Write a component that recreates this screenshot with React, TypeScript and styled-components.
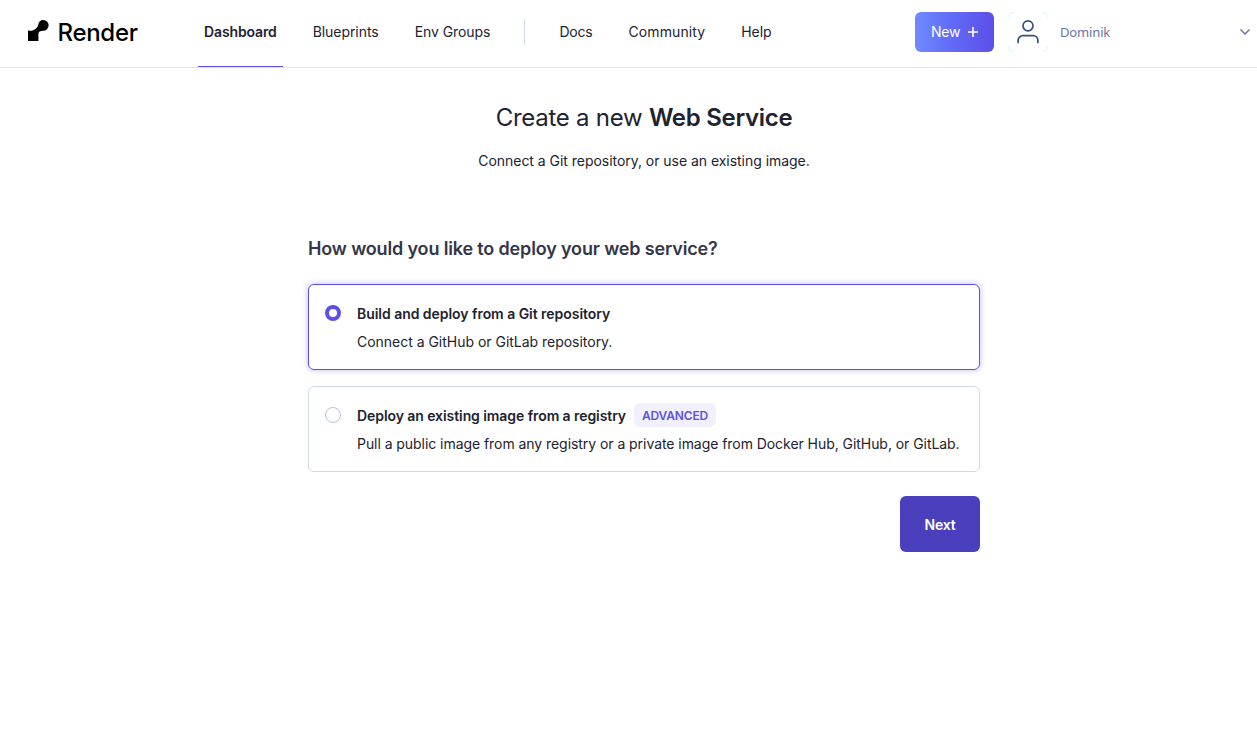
import React from "react";
import styled, { createGlobalStyle } from "styled-components";

const Global = createGlobalStyle`
  * { box-sizing: border-box; }
  body { margin: 0; background: #fff; color: #21222f; font-family: Inter, Roboto, sans-serif; font-size: 14px; line-height: 24px; }
  h1, h2, p { margin: 0; }
  button { font: inherit; border: 0; cursor: pointer; }
`;

const Text = styled.span<{ $track?: number }>`
  letter-spacing: ${(p) => p.$track ?? 0}px;
  white-space: pre;
`;

const Strong = styled(Text)`
  font-weight: 600;
`;

const Header = styled.header`
  height: 68px;
  display: flex;
  align-items: flex-start;
  border-bottom: 1px solid #dfe5f5;
`;

const Logo = styled.a`
  display: flex;
  align-items: flex-start;
  gap: 8.5px;
  width: 170px;
  height: 64px;
  padding-top: 20px;
  margin-left: 28px;
  color: #000;
  font-size: 24px;
  line-height: 26px;
  font-weight: 500;
`;

const Nav = styled.nav`
  display: flex;
  align-items: flex-start;
  gap: 24px;
`;

const NavLink = styled.a<{ $active?: boolean }>`
  height: 67px;
  padding: 20px 6px 0;
  border-bottom: 1px solid ${(p) => (p.$active ? "#5a4fe8" : "transparent")};
  font-weight: ${(p) => (p.$active ? 600 : 400)};
`;

const Divider = styled.div`
  width: 1px;
  height: 24px;
  margin: 20px 4px 0;
  background: #c9d8f0;
`;

const NewButton = styled.button`
  display: flex;
  align-items: center;
  gap: 7.7px;
  width: 79px;
  height: 40px;
  margin: 12px 14px 0 auto;
  padding: 0 0 0 16px;
  border-radius: 6px;
  color: #fff;
  background: linear-gradient(90deg, #6f8bff, #626bf7 45%, #5d4fe9);
`;

const Account = styled.div`
  display: flex;
  align-items: center;
  width: 249px;
  height: 64px;
  padding-right: 7px;
  font-family: "Noto Sans", sans-serif;
  font-size: 13px;
  color: #6b73a3;
`;

const Avatar = styled.div`
  width: 40px;
  height: 40px;
  margin-right: 12px;
  border-radius: 6px;
  background: #c4eefa;
`;

const AvatarFace = styled.div`
  display: flex;
  align-items: center;
  justify-content: center;
  width: 40px;
  height: 40px;
  border-radius: 7.5px;
  background: #fff;
`;

const Chevron = styled.svg`
  margin-left: auto;
`;

const Main = styled.main`
  width: 672px;
  margin: 0 auto 0 308px;
`;

const Intro = styled.section`
  display: flex;
  flex-direction: column;
  align-items: center;
  padding-top: 34px;
`;

const Title = styled.h1`
  font-size: 24px;
  line-height: 32px;
  font-weight: 400;
`;

const Subtitle = styled.p`
  margin-top: 15px;
`;

const Question = styled.h2`
  margin-top: 64px;
  font-size: 18px;
  line-height: 24px;
  font-weight: 600;
  color: #34364a;
`;

const Options = styled.div`
  display: flex;
  flex-direction: column;
  gap: 16px;
  margin-top: 23px;
`;

const Option = styled.label<{ $selected?: boolean }>`
  display: flex;
  gap: 16px;
  height: 86px;
  padding: 16px;
  border: 1px solid ${(p) => (p.$selected ? "#5a4fe8" : "#cdd9ee")};
  border-radius: 6px;
  box-shadow: ${(p) => (p.$selected ? "0 0 6px rgba(90, 79, 232, 0.4)" : "none")};
`;

const Radio = styled.span<{ $selected?: boolean }>`
  width: 16px;
  height: 16px;
  margin-top: 4px;
  flex: none;
  border-radius: 50%;
  border: ${(p) => (p.$selected ? "4px solid #5a4fe8" : "1px solid #b7c0e4")};
`;

const OptionTitle = styled.div`
  display: flex;
  gap: 8px;
  height: 24px;
  padding-top: 1px;
  font-weight: 600;
`;

const OptionText = styled.div`
  margin-top: 4px;
  padding-top: 1px;
`;

const Badge = styled.span`
  height: 24px;
  width: 82px;
  margin-top: -1px;
  padding: 1px 8px 0;
  border-radius: 6px;
  background: #f2f0ff;
  color: #5e50e8;
  font-size: 12px;
`;

const NextButton = styled.button`
  display: block;
  width: 80px;
  height: 56px;
  margin: 24px 0 0 auto;
  padding: 2px 0 0;
  border-radius: 6px;
  background: #4a3fbd;
  color: #fff;
  font-weight: 600;
`;

export default function App() {
  return (
    <>
      <Global />
      <Header>
        <Logo>
          <svg width="21" height="21" viewBox="0 0 21 21" fill="#000">
            <path d="M15.300 0a5.350 5.350 0 1 1 0 10.700c-3.200 0-4.900 1-4.900 3.200V21H0V10.300c1.400.7 3.100.6 4.500.1 3.100-.9 5.100-2.800 5.700-5.600C10.700 1.700 12.500 0 15.300 0z" />
          </svg>
          <Text $track={-0.3}>Render</Text>
        </Logo>
        <Nav>
          <NavLink $active><Text $track={-0.13}>Dashboard</Text></NavLink>
          <NavLink><Text $track={-0.06}>Blueprints</Text></NavLink>
          <NavLink><Text $track={-0.06}>Env Groups</Text></NavLink>
          <Divider />
          <NavLink><Text $track={-0.22}>Docs</Text></NavLink>
          <NavLink><Text $track={0.11}>Community</Text></NavLink>
          <NavLink><Text $track={-0.05}>Help</Text></NavLink>
        </Nav>
        <NewButton>
          <Text $track={-0.2}>New</Text>
          <svg width="10" height="10" viewBox="0 0 10 10" stroke="#fff" strokeWidth="1.6"><path d="M5 0v10M0 5h10" /></svg>
        </NewButton>
        <Account>
          <Avatar>
            <AvatarFace>
              <svg width="24" height="26" viewBox="0 0 24 26" fill="none" stroke="#3a4f7a" strokeWidth="1.7" strokeLinecap="round">
                <circle cx="12" cy="6.8" r="5" />
                <path d="M2.100 23.500v-2a4.800 4.800 0 0 1 4.800-4.800h10.200a4.800 4.800 0 0 1 4.800 4.800v2" />
              </svg>
            </AvatarFace>
          </Avatar>
          <Text $track={-0.15}>Dominik</Text>
          <Chevron width="10" height="6" viewBox="0 0 10 6" fill="none" stroke="#6b73a3" strokeWidth="1.5"><path d="M.5.5 5 5 9.500.5" /></Chevron>
        </Account>
      </Header>
      <Main>
        <Intro>
          <Title><Text $track={-0.26}>Create a new </Text><Strong $track={-0.3}>Web Service</Strong></Title>
          <Subtitle><Text $track={-0.035}>Connect a Git repository, or use an existing image.</Text></Subtitle>
        </Intro>
        <Question><Text $track={-0.155}>How would you like to deploy your web service?</Text></Question>
        <Options>
          <Option $selected>
            <Radio $selected />
            <div>
              <OptionTitle><Text $track={-0.04}>Build and deploy from a Git repository</Text></OptionTitle>
              <OptionText><Text $track={-0.02}>Connect a GitHub or GitLab repository.</Text></OptionText>
            </div>
          </Option>
          <Option>
            <Radio />
            <div>
              <OptionTitle>
                <Text $track={-0.077}>Deploy an existing image from a registry</Text>
                <Badge><Text $track={-0.17}>ADVANCED</Text></Badge>
              </OptionTitle>
              <OptionText><Text $track={-0.055}>Pull a public image from any registry or a private image from Docker Hub, GitHub, or GitLab.</Text></OptionText>
            </div>
          </Option>
        </Options>
        <NextButton><Text $track={-0.15}>Next</Text></NextButton>
      </Main>
    </>
  );
}
